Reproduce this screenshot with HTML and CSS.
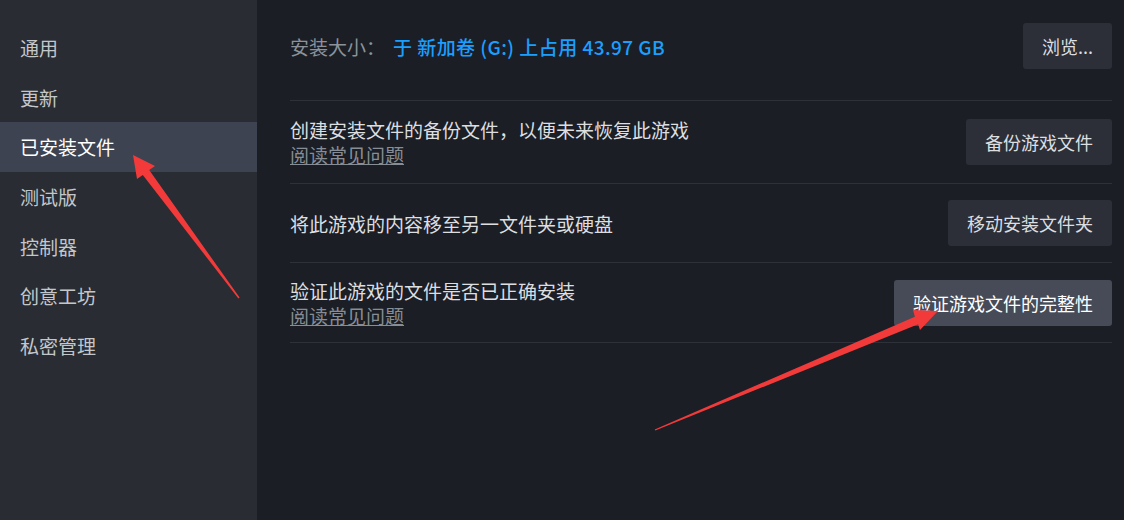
FILE: index.html
```html
<!DOCTYPE html>
<html lang="zh-CN">
<head>
<meta charset="utf-8">
<link rel="stylesheet" href="styles.css">
</head>
<body>
<div class="page">
  <nav class="sidebar">
    <div class="nav-item">通用</div>
    <div class="nav-item">更新</div>
    <div class="nav-item active">已安装文件</div>
    <div class="nav-item">测试版</div>
    <div class="nav-item">控制器</div>
    <div class="nav-item">创意工坊</div>
    <div class="nav-item">私密管理</div>
  </nav>
  <main class="main">
    <div class="row row-top">
      <div class="size">
        <span class="size-label">安装大小：</span>
        <span class="size-value">于 新加卷 (G:) 上占用 43.97 GB</span>
      </div>
      <button class="btn">浏览...</button>
    </div>
    <div class="row">
      <div class="desc">
        <div class="desc-text">创建安装文件的备份文件，以便未来恢复此游戏</div>
        <a class="faq">阅读常见问题</a>
      </div>
      <button class="btn">备份游戏文件</button>
    </div>
    <div class="row">
      <div class="desc">
        <div class="desc-text">将此游戏的内容移至另一文件夹或硬盘</div>
      </div>
      <button class="btn">移动安装文件夹</button>
    </div>
    <div class="row row-last">
      <div class="desc">
        <div class="desc-text">验证此游戏的文件是否已正确安装</div>
        <a class="faq">阅读常见问题</a>
      </div>
      <button class="btn btn-hover">验证游戏文件的完整性</button>
    </div>
  </main>
  <svg class="arrows" width="1124" height="520" viewBox="0 0 1124 520">
    <polygon points="133,155 155,166 149.2,170.1 239.6,297.6 238.4,298.4 142.8,174.9 137,179" fill="#f23a3a"/>
    <polygon points="938,311 913,310 914.9,316.8 654.7,429.4 655.3,430.6 918.1,324.2 920,330" fill="#f23a3a"/>
  </svg>
</div>
</body>
</html>
```
FILE: styles.css
```css
* { box-sizing: border-box; }
html, body {
  margin: 0;
  padding: 0;
  width: 1124px;
  height: 520px;
  overflow: hidden;
  background: #1b1e25;
  font-family: "Noto Sans CJK SC", "Noto Sans", sans-serif;
}
.page {
  position: relative;
  display: flex;
  width: 1124px;
  height: 520px;
}
.sidebar {
  width: 257px;
  flex: none;
  background: #292c33;
  padding-top: 23px;
}
.nav-item {
  height: 49.6px;
  display: flex;
  align-items: center;
  padding-left: 20px;
  font-size: 19px;
  color: #c4c7ca;
}
.nav-item.active {
  background: #3d4350;
  color: #ffffff;
}
.main {
  flex: 1;
  padding: 0 12px 0 33px;
}
.row {
  display: flex;
  align-items: center;
  justify-content: space-between;
  padding: 16px 0;
  border-bottom: 1px solid #2e313a;
}
.row-top {
  padding: 23px 0 31px;
}
.row-last {
  padding: 15px 0 14px;
}
.size {
  font-size: 19px;
  display: flex;
  align-items: center;
}
.size-label {
  color: #8b929a;
  margin-right: 8px;
}
.size-value {
  color: #1a9fff;
  font-weight: 500;
  letter-spacing: 0.45px;
}
.desc {
  display: flex;
  flex-direction: column;
  font-size: 19px;
  line-height: 25px;
}
.desc-text {
  color: #dcdee0;
}
.faq {
  color: #878d95;
  text-decoration: underline;
  text-underline-offset: 1px;
}
.btn {
  height: 46px;
  padding: 0 19px;
  border: none;
  border-radius: 3px;
  background: #2c2f37;
  color: #dcdee0;
  font-family: "Noto Sans CJK SC", "Noto Sans", sans-serif;
  font-size: 18px;
}
.btn-hover {
  background: #464b57;
  color: #ffffff;
}
.arrows {
  position: absolute;
  left: 0;
  top: 0;
  pointer-events: none;
}
```
